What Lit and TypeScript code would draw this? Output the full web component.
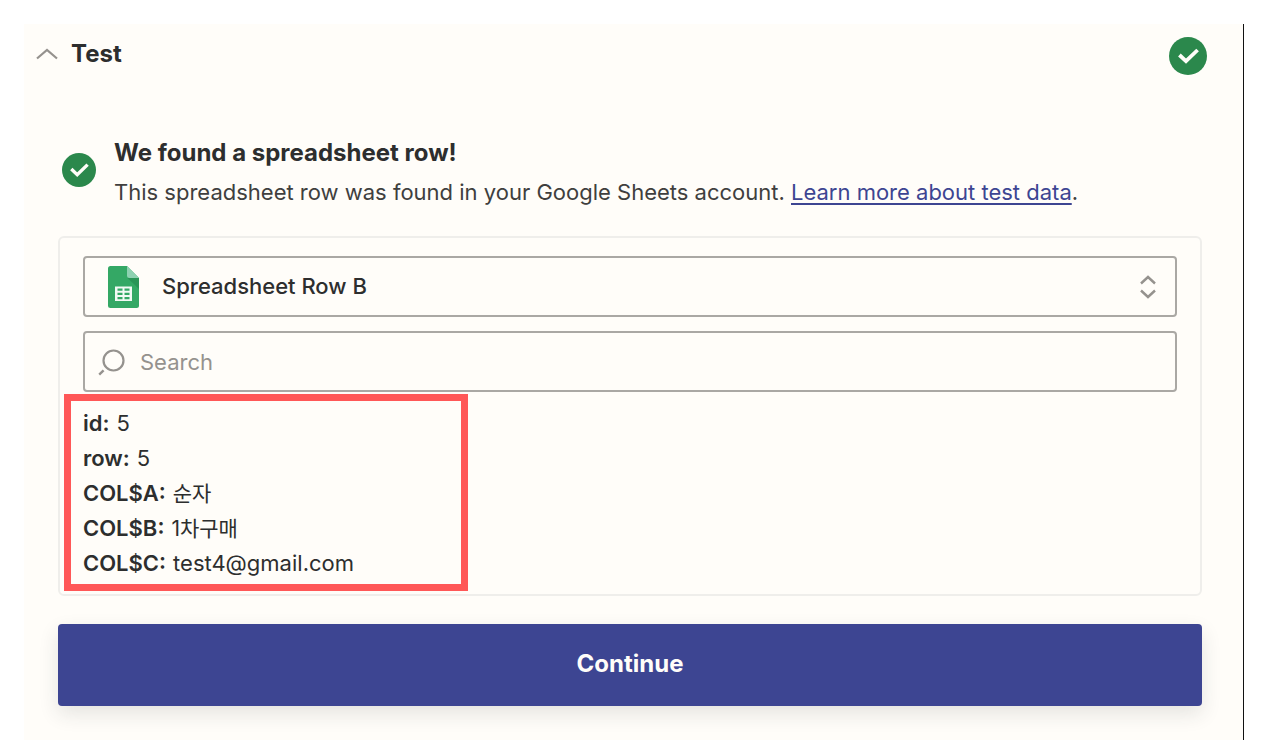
import { LitElement, html, css, svg, nothing } from "lit";
import { customElement, property, state } from "lit/decorators.js";

interface Field {
  key: string;
  value: string;
  lang?: string;
}

@customElement("status-check")
export class StatusCheck extends LitElement {
  @property() label = "Success";

  static styles = css`
    :host {
      display: block;
      width: 34px;
      height: 34px;
      flex: none;
    }
    .icon {
      display: block;
      width: 100%;
      height: 100%;
    }
  `;

  render() {
    return html`<svg class="icon" viewBox="0 0 38 38" role="img" aria-label=${this.label}>
      <circle cx="19" cy="19" r="19" fill="#2b884c"></circle>
      <path d="M10.4 18 L17 24.2 L28.6 13" fill="none" stroke="#fffdf9" stroke-width="3.8"></path>
    </svg>`;
  }
}

const chevron = svg`<path d="M1 10.5 L11 2 L21 10.5" fill="none" stroke="#95928e" stroke-width="2.2"></path>`;

@customElement("app-root")
export class AppRoot extends LitElement {
  @state() private query = "";

  private fields: Field[] = [
    { key: "id", value: "5" },
    { key: "row", value: "5" },
    { key: "COL$A", value: "순자", lang: "ko" },
    { key: "COL$B", value: "1차구매", lang: "ko" },
    { key: "COL$C", value: "test4@gmail.com" },
  ];

  static styles = css`
    :host {
      display: block;
      padding: 24px 36px 9px 24px;
      background: #ffffff;
      color: #2d2e2e;
      font-family: Inter, "Noto Sans CJK KR", sans-serif;
      font-size: 22px;
      line-height: 35px;
    }
    * {
      box-sizing: border-box;
    }
    .panel {
      background: #fffdf9;
      border-right: 1px solid #111111;
      padding-bottom: 34px;
    }
    .header {
      display: flex;
      align-items: center;
      justify-content: space-between;
      padding: 13px 36px 0 12px;
    }
    .header status-check {
      width: 38px;
      height: 38px;
    }
    .title {
      margin: 0;
      font-size: 24px;
      line-height: 34px;
    }
    .toggle {
      display: flex;
      align-items: center;
      gap: 13px;
      padding: 0 0 4px;
      border: 0;
      background: none;
      color: inherit;
      font: inherit;
      font-weight: 700;
      cursor: pointer;
    }
    .chevron {
      width: 22px;
      height: 12px;
    }
    .body {
      padding: 60px 41px 0 34px;
    }
    .notice {
      display: flex;
      align-items: flex-start;
      gap: 18px;
      padding-left: 4px;
    }
    .notice status-check {
      margin-top: 18px;
    }
    .notice-title {
      margin: 0;
      font-size: 24px;
      font-weight: 700;
      line-height: 36px;
    }
    .notice-text {
      margin: 0;
      line-height: 42px;
      color: #403f3e;
    }
    .link {
      color: #3d4592;
      text-underline-offset: 3px;
    }
    .card {
      margin-top: 23px;
      padding: 18px 23px 13px;
      border: 2px solid #efeeeb;
      border-radius: 6px;
    }
    .control {
      display: grid;
      align-items: center;
      margin-bottom: 14px;
    }
    .control > * {
      grid-area: 1 / 1;
    }
    .field {
      width: 100%;
      height: 61px;
      margin: 0;
      border: 2px solid #aaa8a4;
      border-radius: 4px;
      background: #fffdf9;
      color: inherit;
      font: inherit;
      appearance: none;
    }
    .select {
      padding: 0 60px 0 77px;
      font-weight: 500;
    }
    .search {
      padding: 0 16px 0 55px;
    }
    .search::placeholder {
      color: #95928e;
      opacity: 1;
    }
    .glyph {
      pointer-events: none;
      z-index: 1;
    }
    .sheet {
      width: 31px;
      height: 42px;
      margin-left: 25px;
    }
    .updown {
      width: 16px;
      height: 24px;
      margin-right: 21px;
      justify-self: end;
    }
    .lens {
      width: 28px;
      height: 28px;
      margin-left: 15px;
    }
    .record {
      position: relative;
    }
    .fields {
      margin: 0;
    }
    .entry {
      display: flex;
      gap: 7px;
    }
    .key {
      font-weight: 600;
    }
    .value {
      margin: 0;
    }
    .value:lang(ko) {
      font-size: 21px;
    }
    .highlight {
      position: absolute;
      left: -19px;
      top: -12px;
      width: 404px;
      bottom: -10px;
      border: 7px solid #ff5757;
      pointer-events: none;
    }
    .continue {
      display: block;
      width: 100%;
      height: 82px;
      margin-top: 28px;
      padding: 0 0 4px;
      border: 0;
      border-radius: 4px;
      background: #3d4592;
      color: #fffdf9;
      font: inherit;
      font-size: 24px;
      font-weight: 700;
      box-shadow: 0 8px 20px rgba(45, 46, 46, 0.12);
      cursor: pointer;
    }
  `;

  private onSearch(event: Event) {
    this.query = (event.target as HTMLInputElement).value.toLowerCase();
  }

  private get matches() {
    return this.fields.filter((f) => `${f.key}: ${f.value}`.toLowerCase().includes(this.query));
  }

  render() {
    return html`
      <section class="panel">
        <header class="header">
          <h2 class="title">
            <button class="toggle" type="button" aria-expanded="true">
              <svg class="chevron" viewBox="0 0 22 12" aria-hidden="true">${chevron}</svg>
              Test
            </button>
          </h2>
          <status-check></status-check>
        </header>
        <div class="body">
          <div class="notice">
            <status-check></status-check>
            <div>
              <h3 class="notice-title">We found a spreadsheet row!</h3>
              <p class="notice-text">
                This spreadsheet row was found in your Google Sheets account.
                <a class="link" href="#">Learn more about test data</a>.
              </p>
            </div>
          </div>
          <div class="card">
            <div class="control">
              <select class="field select" aria-label="Test record">
                <option>Spreadsheet Row B</option>
              </select>
              <svg class="glyph sheet" viewBox="0 0 31 42" aria-hidden="true">
                <path d="M2.5 0 H19 L31 12 V39.5 Q31 42 28.5 42 H2.5 Q0 42 0 39.5 V2.5 Q0 0 2.5 0Z" fill="#34a865"></path>
                <path d="M19.5 12 H31 V23Z" fill="#2a9557"></path>
                <path d="M19 0 L31 12 H21.5 Q19 12 19 9.5Z" fill="#8ed1b1"></path>
                <path d="M7 20.5 H24 V35 H7Z" fill="#f2faf5"></path>
                <path d="M9.5 22.5h5v2.3h-5zM16.5 22.5h5v2.3h-5zM9.5 26.7h5v2.3h-5zM16.5 26.7h5v2.3h-5zM9.5 30.9h5v2.3h-5zM16.5 30.9h5v2.3h-5z" fill="#34a865"></path>
              </svg>
              <svg class="glyph updown" viewBox="0 0 16 24" aria-hidden="true">
                <path d="M1 8.5 L8 2 L15 8.5 M1 15.5 L8 22 L15 15.5" fill="none" stroke="#95928e" stroke-width="2.4"></path>
              </svg>
            </div>
            <div class="control">
              <input class="field search" type="search" placeholder="Search" aria-label="Search" @input=${this.onSearch} />
              <svg class="glyph lens" viewBox="0 0 28 28" aria-hidden="true">
                <circle cx="15.5" cy="12.5" r="10" fill="none" stroke="#95928e" stroke-width="2.2"></circle>
                <path d="M1.2 26.6 L5.6 22.4" stroke="#95928e" stroke-width="2.4"></path>
              </svg>
            </div>
            <div class="record">
              <dl class="fields">
                ${this.matches.map(
                  (f) => html`<div class="entry">
                    <dt class="key">${f.key}:</dt>
                    <dd class="value" lang=${f.lang ?? nothing}>${f.value}</dd>
                  </div>`
                )}
              </dl>
              <div class="highlight"></div>
            </div>
          </div>
          <button class="continue" type="button">Continue</button>
        </div>
      </section>
    `;
  }
}
